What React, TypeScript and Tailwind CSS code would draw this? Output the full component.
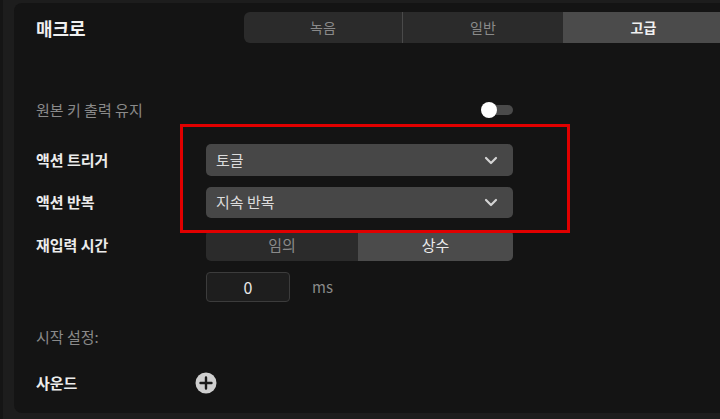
import React from "react";

const font = { fontFamily: '"Noto Sans CJK KR", "Noto Sans", sans-serif' };

function Chevron() {
  return (
    <svg width="14" height="9" viewBox="0 0 14 9" fill="none">
      <path d="M2 2l5 5 5-5" stroke="#d4d4d4" strokeWidth="2.2" strokeLinecap="round" strokeLinejoin="round" />
    </svg>
  );
}

function Select({ label }: { label: string }) {
  return (
    <div className="w-[307px] h-full rounded-[5px] bg-[#474747] flex items-center justify-between pl-[10px] pr-[15px]">
      <span className="text-[15px] text-[#dcdcdc]">{label}</span>
      <Chevron />
    </div>
  );
}

export default function App() {
  return (
    <div style={font} className="relative w-[720px] h-[419px] overflow-hidden bg-[#1d1d1d] border-l-[3px] border-[#151515]">
      <div className="ml-[11px] mt-[3px] w-[720px] h-[410px] rounded-[8px] bg-[#141414] pl-[22px]">
        <div className="flex items-center pt-[9px] h-[40px]">
          <div className="w-[208px] text-[18px] font-bold text-[#f0f0f0] leading-none">매크로</div>
          <div className="flex w-[480px] h-[31px] rounded-l-[6px] overflow-hidden text-[14px]">
            <div className="w-[159px] bg-[#2b2b2b] text-[#8a8a8a] flex items-center justify-center border-r border-[#4a4a4a]">녹음</div>
            <div className="w-[160px] bg-[#2b2b2b] text-[#8a8a8a] flex items-center justify-center">일반</div>
            <div className="w-[161px] bg-[#4b4b4b] text-[#f0f0f0] font-bold flex items-center justify-center">고급</div>
          </div>
        </div>

        <div className="mt-[57px] h-[20px] flex items-center">
          <div className="w-[170px] text-[15px] text-[#8a8a8a]">원본 키 출력 유지</div>
          <div className="ml-[275px] relative w-[33px] h-[16px] flex items-center">
            <div className="absolute left-[8px] w-[24px] h-[10px] rounded-full bg-[#4a4a4a]" />
            <div className="absolute left-0 w-[16px] h-[16px] rounded-full bg-white" />
          </div>
        </div>

        <div className="mt-[24px] h-[32px] flex items-center">
          <div className="w-[170px] text-[15px] font-bold text-[#ececec]">액션 트리거</div>
          <Select label="토글" />
        </div>

        <div className="mt-[11px] h-[31px] flex items-center">
          <div className="w-[170px] text-[15px] font-bold text-[#ececec]">액션 반복</div>
          <Select label="지속 반복" />
        </div>

        <div className="mt-[12px] h-[31px] flex items-center">
          <div className="w-[170px] text-[15px] font-bold text-[#ececec]">재입력 시간</div>
          <div className="w-[307px] h-full rounded-[5px] overflow-hidden flex text-[15px]">
            <div className="w-[152px] bg-[#2b2b2b] text-[#8a8a8a] flex items-center justify-center">임의</div>
            <div className="flex-1 bg-[#4b4b4b] text-[#ececec] flex items-center justify-center">상수</div>
          </div>
        </div>

        <div className="mt-[11px] h-[30px] flex items-center">
          <div className="w-[170px]" />
          <div className="w-[84px] h-full rounded-[4px] bg-[#1e1e1e] border border-[#3c3c3c] flex items-center justify-center text-[16px] text-[#e8e8e8]">0</div>
          <div className="ml-[22px] text-[15px] text-[#8a8a8a]">ms</div>
        </div>

        <div className="mt-[25px] h-[20px] flex items-center">
          <div className="text-[15px] text-[#8a8a8a]">시작 설정:</div>
        </div>

        <div className="mt-[25px] h-[22px] flex items-center">
          <div className="w-[159px] text-[15px] font-bold text-[#ececec]">사운드</div>
          <svg width="22" height="22" viewBox="0 0 22 22">
            <circle cx="11" cy="11" r="10.5" fill="#cfcfcf" />
            <path d="M11 5.5v11M5.5 11h11" stroke="#1a1a1a" strokeWidth="2.4" strokeLinecap="round" />
          </svg>
        </div>
      </div>

      <div className="absolute left-[177px] top-[124px] w-[390px] h-[109px] border-[3px] border-[#e00000] pointer-events-none" />
    </div>
  );
}
